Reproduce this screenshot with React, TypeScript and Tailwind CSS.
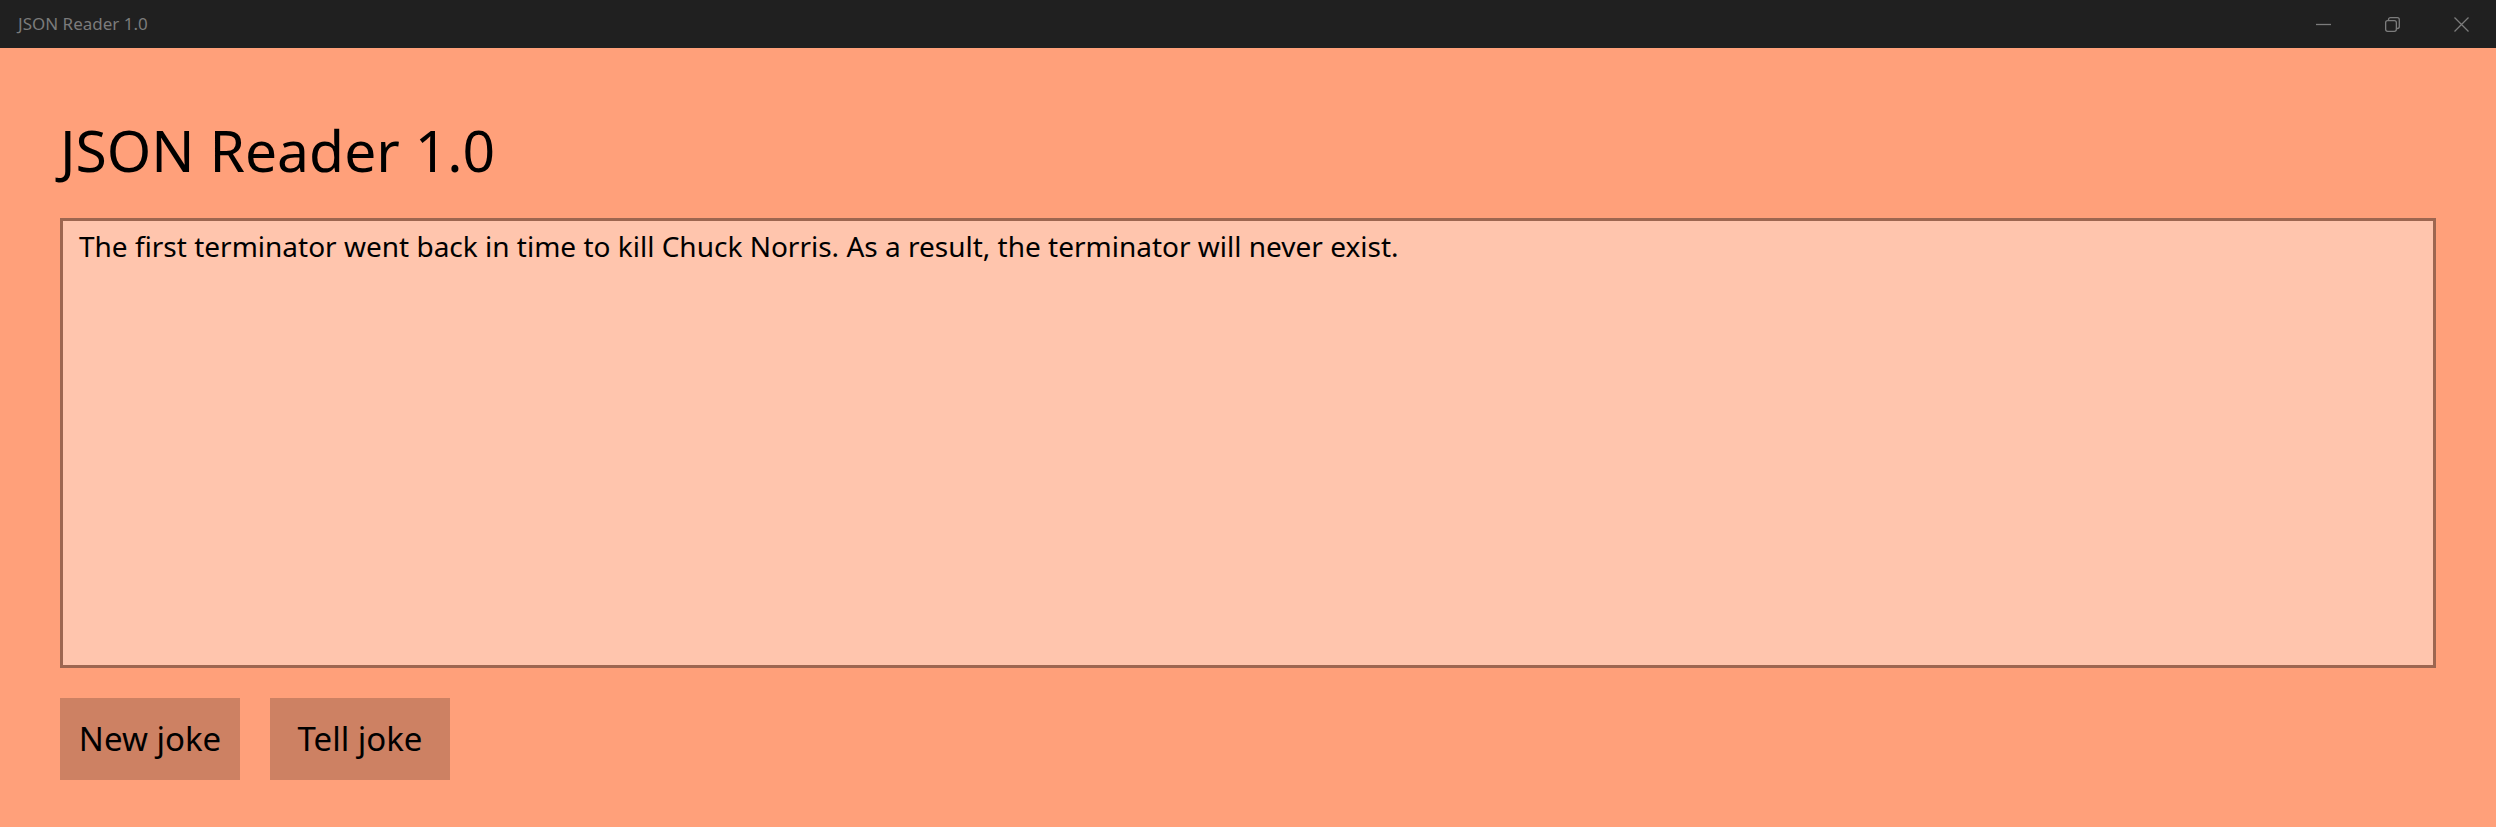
import { useState } from "react";

const jokes = [
  "The first terminator went back in time to kill Chuck Norris. As a result, the terminator will never exist.",
];

function TitleBar() {
  return (
    <div className="h-[48px] shrink-0 flex items-center justify-between bg-[#202020]">
      <div className="pl-[18px] text-[17px] text-[#7b7b7b] font-['Noto_Sans',sans-serif]">
        JSON Reader 1.0
      </div>
      <div className="flex h-full">
        <div className="w-[69px] h-full flex items-center justify-center">
          <svg width="15" height="15" viewBox="0 0 15 15" fill="none" stroke="#7c7c7c" strokeWidth="1.3">
            <path d="M0 7.5H15" />
          </svg>
        </div>
        <div className="w-[69px] h-full flex items-center justify-center">
          <svg width="15" height="15" viewBox="0 0 15 15" fill="none" stroke="#7c7c7c" strokeWidth="1.3">
            <rect x="0.65" y="3.65" width="10.7" height="10.7" rx="2" />
            <path d="M3.5 3.6V2.7a2 2 0 0 1 2-2h6.8a2 2 0 0 1 2 2v6.8a2 2 0 0 1-2 2h-0.9" />
          </svg>
        </div>
        <div className="w-[69px] h-full flex items-center justify-center">
          <svg width="15" height="15" viewBox="0 0 15 15" fill="none" stroke="#7c7c7c" strokeWidth="1.3">
            <path d="M0.5 0.5L14.5 14.5M14.5 0.5L0.5 14.5" />
          </svg>
        </div>
      </div>
    </div>
  );
}

export default function App() {
  const [joke, setJoke] = useState(jokes[0]);

  return (
    <div className="h-[827px] w-full flex flex-col bg-[#ffa07a] text-black font-['Noto_Sans',sans-serif] overflow-hidden">
      <TitleBar />
      <main className="flex-1 flex flex-col px-[60px]">
        <h1 className="mt-[74px] text-[57px] leading-[57px] font-normal">JSON Reader 1.0</h1>
        <textarea
          className="mt-[39px] h-[450px] w-full resize-none border-[3px] border-[#9d6650] bg-[#ffc5ad] pt-[6px] pl-[16px] pr-[16px] text-[28px] leading-[38px] outline-none"
          value={joke}
          onChange={(e) => setJoke(e.target.value)}
        />
        <div className="mt-[30px] flex gap-[30px]">
          <button className="w-[180px] h-[82px] bg-[#cd8163] text-[33px] flex items-center justify-center">
            New joke
          </button>
          <button className="w-[180px] h-[82px] bg-[#cd8163] text-[33px] flex items-center justify-center">
            Tell joke
          </button>
        </div>
      </main>
    </div>
  );
}
